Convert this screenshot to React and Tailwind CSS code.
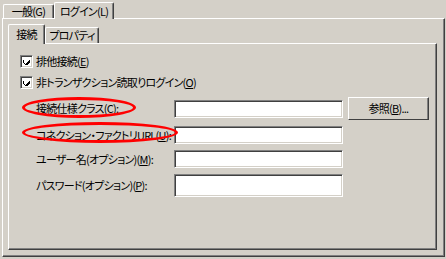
import React from 'react'

const raised = 'border-t border-l border-t-white border-l-white border-r border-r-[#404040] shadow-[inset_-1px_0_0_#808080]'

function Tab({ label, selected, w, h }) {
  return (
    <div
      className={`${raised} ${w} ${h} shrink-0 bg-[#D4D0C8] flex items-center justify-center whitespace-nowrap rounded-tl-[2px] rounded-tr-[2px] ${
        selected ? 'relative z-10 -mb-px' : ''
      }`}
    >
      {label}
    </div>
  )
}

function Mn({ children }) {
  return <span className="underline underline-offset-[1px]">{children}</span>
}

function CheckBox() {
  return (
    <div className="w-[13px] h-[13px] shrink-0 bg-white border-t border-l border-t-[#808080] border-l-[#808080] border-r border-b border-r-white border-b-white shadow-[inset_1px_1px_0_#404040,inset_-1px_-1px_0_#D4D0C8] flex items-center justify-center">
      <svg width="7" height="7" viewBox="0 0 7 7" shapeRendering="crispEdges">
        <path d="M0 2h1v3h1v1h1v-1h1v-1h1v-1h1v-1h1v3h-1v1h-1v1h-1v1h-1v-1h-1v-1h-1v-1h-1z" fill="#000" />
      </svg>
    </div>
  )
}

function Field({ h }) {
  return (
    <div className={`w-[169px] ${h} shrink-0 bg-white border-t border-l border-t-[#808080] border-l-[#808080] border-r border-b border-r-white border-b-white shadow-[inset_1px_1px_0_#404040,inset_-1px_-1px_0_#D4D0C8]`} />
  )
}

export default function App() {
  return (
    <div className="w-[446px] h-[259px] bg-[#D4D0C8] relative overflow-hidden text-[11px] leading-none tracking-[-0.75px] text-black whitespace-nowrap font-['Noto_Sans_CJK_JP',sans-serif] [font-feature-settings:'palt'] pl-[2px] pt-[2px]">
      {/* outer tabs */}
      <div className="flex items-end h-[16px] pl-px">
        <Tab label="一般(G)" w="w-[51px]" h="h-[14px]" />
        <Tab label="ログイン(L)" selected w="w-[60px]" h="h-[17px]" />
      </div>

      {/* outer panel */}
      <div className="w-[443px] h-[239px] border-t border-l border-t-white border-l-white border-r border-b border-r-[#404040] border-b-[#404040] shadow-[inset_-1px_-1px_0_#808080] pt-[5px] pl-[5px]">
        {/* inner tabs */}
        <div className="flex items-end h-[19px]">
          <Tab label="接続" selected w="w-[37px]" h="h-[20px]" />
          <Tab label="プロパティ" w="w-[54px]" h="h-[16px]" />
        </div>

        {/* inner panel */}
        <div className="w-[429px] h-[207px] border-t border-l border-t-white border-l-white border-r border-b border-r-[#404040] border-b-[#404040] shadow-[inset_-1px_-1px_0_#808080] pl-[11px] pt-[11px]">
          <div className="flex items-center gap-[3px] h-[13px]">
            <CheckBox />
            <span>排他接続(<Mn>E</Mn>)</span>
          </div>
          <div className="flex items-center gap-[3px] h-[13px] mt-[8px]">
            <CheckBox />
            <span>非トランザクション読取りログイン(<Mn>O</Mn>)</span>
          </div>

          <div className="pl-[16px] mt-[8px] flex flex-col gap-[6px]">
            <div className="flex items-center h-[23px]">
              <span className="w-[138px] shrink-0">接続仕様クラス(<Mn>C</Mn>):</span>
              <Field h="h-[18px]" />
              <button className={`${raised} border-b border-b-[#404040] shadow-[inset_-1px_-1px_0_#808080] ml-[5px] w-[81px] h-[23px] shrink-0 bg-[#D4D0C8] flex items-center justify-center`}>
                参照(<Mn>B</Mn>)...
              </button>
            </div>
            <div className="flex items-center h-[18px]">
              <span className="w-[138px] shrink-0">コネクション・ファクトリURL(<Mn>U</Mn>):</span>
              <Field h="h-[18px]" />
            </div>
            <div className="flex items-center h-[18px]">
              <span className="w-[138px] shrink-0">ユーザー名(オプション)(<Mn>M</Mn>):</span>
              <Field h="h-[18px]" />
            </div>
            <div className="flex items-center h-[23px]">
              <span className="w-[138px] shrink-0">パスワード(オプション)(<Mn>P</Mn>):</span>
              <Field h="h-[23px]" />
            </div>
          </div>
        </div>
      </div>

      {/* red annotation ellipses */}
      <div className="absolute left-[22px] top-[97px] w-[114px] h-[21px] rounded-[50%] border-[3px] border-[#FF0000]" />
      <div className="absolute left-[22px] top-[122px] w-[156px] h-[21px] rounded-[50%] border-[3px] border-[#FF0000]" />
    </div>
  )
}
